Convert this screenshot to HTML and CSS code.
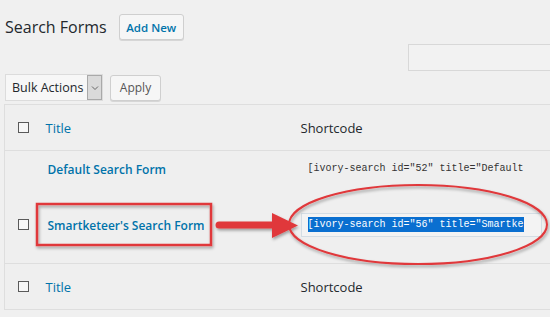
FILE: index.html
```html
<!DOCTYPE html>
<html lang="en">
<head>
    <meta charset="UTF-8">
    <meta name="viewport" content="width=device-width, initial-scale=1.0">
    <title>Search Forms</title>
    <link rel="stylesheet" href="styles.css">
</head>
<body>
<div class="wrap">
<div class="page-head">
<h1>Search Forms</h1>
<a class="btn add-new" href="#">Add New</a>
</div>
<div class="search-row">
<input class="search-input" type="search">
</div>
<div class="tablenav">
<div class="bulk-select">
<span class="bulk-label">Bulk Actions</span>
<span class="bulk-arrow">
<svg width="8" height="6" viewBox="0 0 8 6"><path d="M1 1.5 L4 4.5 L7 1.5" fill="none" stroke="#666" stroke-width="1"/></svg>
</span>
</div>
<button class="btn apply">Apply</button>
</div>
<table class="forms-table">
<thead>
<tr class="head-row">
<td class="col-cb"><span class="cb"></span></td>
<td class="col-title"><a href="#">Title</a></td>
<td class="col-code">Shortcode</td>
</tr>
</thead>
<tbody>
<tr class="row-one">
<td class="col-cb"></td>
<td class="col-title"><a class="row-title" href="#">Default Search Form</a></td>
<td class="col-code"><div class="code-box plain">[ivory-search id="52" title="Default</div></td>
</tr>
<tr class="row-two">
<td class="col-cb"><span class="cb"></span></td>
<td class="col-title"><a class="row-title" href="#">Smartketeer's Search Form</a></td>
<td class="col-code"><div class="code-box"><span class="selected">[ivory-search id="56" title="Smartke</span></div></td>
</tr>
</tbody>
<tfoot>
<tr class="head-row">
<td class="col-cb"><span class="cb"></span></td>
<td class="col-title"><a href="#">Title</a></td>
<td class="col-code">Shortcode</td>
</tr>
</tfoot>
</table>
</div>

<!-- annotation marks drawn over the screenshot -->
<svg class="annotations" width="550" height="317" viewBox="0 0 550 317">
<defs>
<filter id="shade" x="-10%" y="-20%" width="120%" height="140%">
<feDropShadow dx="1" dy="2" stdDeviation="1.5" flood-color="#000" flood-opacity="0.35"/>
</filter>
</defs>
<g filter="url(#shade)" stroke="#e0383b" fill="none">
<rect x="37" y="204" width="174" height="41" stroke-width="2.5"/>
<ellipse cx="418" cy="224.5" rx="129" ry="39.5" stroke-width="2"/>
<line x1="219" y1="225" x2="276" y2="225" stroke-width="7" stroke-linecap="round"/>
<polygon points="272,213 298,225.5 272,238" fill="#e0383b" stroke="none"/>
</g>
</svg>
</body>
</html>
```

FILE: styles.css
```css
body {
    margin: 0;
    background-color: #f0f0f0;
    color: #23282d;
    font-family: "Open Sans", "Noto Sans", sans-serif;
    font-size: 13px;
    overflow: hidden;
}

.wrap {
    padding-left: 4px;
}

a {
    color: #0073aa;
    text-decoration: none;
}

.page-head {
    display: flex;
    align-items: center;
    gap: 12px;
    padding-top: 14px;
    padding-left: 1px;
}

h1 {
    margin: 0;
    font-size: 16px;
    font-weight: 400;
    color: #23282d;
}

.btn {
    display: inline-flex;
    align-items: center;
    justify-content: center;
    box-sizing: border-box;
    height: 26px;
    padding: 0;
    background-color: #f6f6f6;
    border: 1px solid #cfcfcf;
    border-radius: 3px;
    box-shadow: 0 1px 0 #d6d6d6;
    font-family: inherit;
    font-size: 13px;
}

.add-new {
    width: 65px;
    font-size: 11.5px;
    font-weight: 600;
    color: #0073aa;
}

.search-row {
    display: flex;
    justify-content: flex-end;
    margin-top: 4px;
    margin-right: -20px;
}

.search-input {
    box-sizing: border-box;
    width: 162px;
    height: 27px;
    background-color: #f2f2f2;
    border: 1px solid #d8d8d8;
    outline: none;
}

.tablenav {
    display: flex;
    align-items: center;
    gap: 7px;
    margin-top: 3px;
    padding-left: 1px;
}

.bulk-select {
    display: flex;
    box-sizing: border-box;
    width: 98px;
    height: 27px;
    background-color: #f7f7f7;
    border: 1px solid #dcdcdc;
}

.bulk-label {
    flex: 1;
    display: flex;
    align-items: center;
    padding-left: 6px;
    font-size: 12.5px;
    color: #23282d;
}

.bulk-arrow {
    display: flex;
    align-items: center;
    justify-content: center;
    width: 13px;
    background-color: #dadada;
    border: 1px solid #a9a9a9;
}

.apply {
    width: 51px;
    font-size: 12px;
    color: #555;
}

.forms-table {
    width: 560px;
    margin-top: 3px;
    border-collapse: collapse;
    border: 1px solid #dedede;
    background-color: #efefef;
}

.forms-table td {
    padding: 0;
    vertical-align: middle;
}

.head-row td {
    height: 45px;
    font-size: 13px;
}

thead .head-row td {
    border-bottom: 1px solid #dedede;
}

tfoot .head-row td {
    border-top: 1px solid #dedede;
}

.row-one td {
    height: 35px;
}

.row-two td {
    height: 77px;
}

.col-cb {
    width: 40px;
    padding-left: 13px !important;
    box-sizing: border-box;
}

.col-title {
    width: 255px;
    padding-left: 1px !important;
}

.cb {
    display: block;
    box-sizing: border-box;
    width: 11px;
    height: 11px;
    border: 1px solid #5a5a5a;
    background-color: #f7f7f7;
}

.row-title {
    font-weight: 600;
    font-size: 12px;
    padding-left: 2px;
}

.code-box {
    box-sizing: border-box;
    width: 241px;
    height: 24px;
    padding: 4px 6px 0;
    border: 1px solid #d4dde4;
    background-color: #f3f3f3;
    font-family: "Liberation Mono", "DejaVu Sans Mono", monospace;
    font-size: 10px;
    line-height: 14px;
    color: #333;
    white-space: nowrap;
    overflow: hidden;
}

.code-box.plain {
    border-color: transparent;
    background-color: transparent;
}

.selected {
    background-color: #0a6fd0;
    color: #fff;
    padding: 2px 0;
}

.annotations {
    position: absolute;
    top: 0;
    left: 0;
    pointer-events: none;
}
```
